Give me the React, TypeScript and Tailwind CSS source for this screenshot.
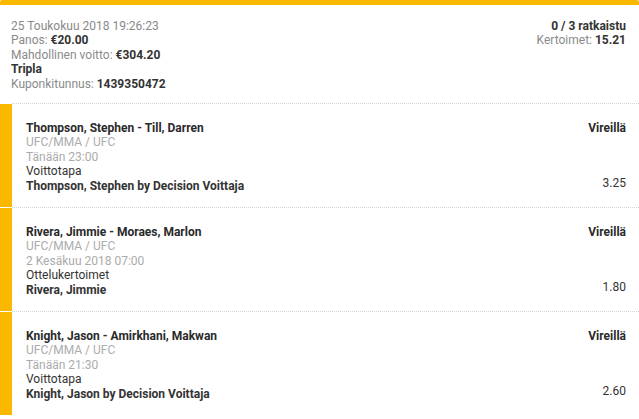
import React from "react";

const bets = [
  {
    title: "Thompson, Stephen - Till, Darren",
    league: "UFC/MMA / UFC",
    time: "Tänään 23:00",
    market: "Voittotapa",
    pick: "Thompson, Stephen by Decision Voittaja",
    odds: "3.25",
  },
  {
    title: "Rivera, Jimmie - Moraes, Marlon",
    league: "UFC/MMA / UFC",
    time: "2 Kesäkuu 2018 07:00",
    market: "Ottelukertoimet",
    pick: "Rivera, Jimmie",
    odds: "1.80",
  },
  {
    title: "Knight, Jason - Amirkhani, Makwan",
    league: "UFC/MMA / UFC",
    time: "Tänään 21:30",
    market: "Voittotapa",
    pick: "Knight, Jason by Decision Voittaja",
    odds: "2.60",
  },
];

export default function App() {
  return (
    <div
      className="w-[639px] h-[419px] bg-white overflow-hidden text-[12px] leading-[14.4px] text-[#333]"
      style={{ fontFamily: "Roboto, 'Liberation Sans', sans-serif" }}
    >
      <div className="h-[5px] bg-[#fbb800] rounded-t-[2px]" />
      <div className="flex justify-between pl-[11px] pr-[13px] pt-[14px] h-[98px]">
        <div>
          <div className="text-[#8a8a8a]">25 Toukokuu 2018 19:26:23</div>
          <div className="text-[#8a8a8a]">
            Panos: <span className="font-bold text-[#333]">€20.00</span>
          </div>
          <div className="text-[#8a8a8a]">
            Mahdollinen voitto: <span className="font-bold text-[#333]">€304.20</span>
          </div>
          <div className="font-bold text-[#333]">Tripla</div>
          <div className="text-[#8a8a8a]">
            Kuponkitunnus: <span className="font-bold text-[#333]">1439350472</span>
          </div>
        </div>
        <div className="text-right">
          <div className="font-bold text-[#333]">0 / 3 ratkaistu</div>
          <div className="text-[#8a8a8a]">
            Kertoimet: <span className="font-bold text-[#333]">15.21</span>
          </div>
        </div>
      </div>
      {bets.map((b, i) => (
        <div key={i} className="flex h-[104px]">
          <div className="w-[12px] bg-[#fbb800] mt-[1px]" />
          <div className="flex-1 border-t border-dotted border-[#d4d4d4] pl-[14px] pr-[13px] pt-[17px] flex justify-between">
            <div>
              <div className="font-bold text-[#2a2a2a]">{b.title}</div>
              <div className="text-[#ababab]">{b.league}</div>
              <div className="text-[#ababab]">{b.time}</div>
              <div className="text-[#333]">{b.market}</div>
              <div className="font-bold text-[#333]">{b.pick}</div>
            </div>
            <div className="flex flex-col justify-between items-end pb-[17px]">
              <div className="font-bold text-[#2a2a2a]">Vireillä</div>
              <div className="text-[#333]">{b.odds}</div>
            </div>
          </div>
        </div>
      ))}
    </div>
  );
}
